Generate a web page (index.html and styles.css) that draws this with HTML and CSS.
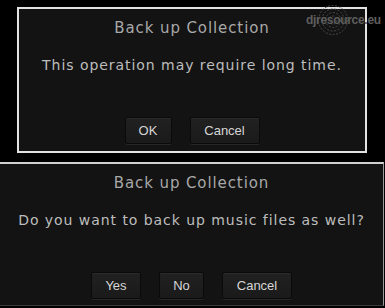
FILE: index.html
```html
<!DOCTYPE html>
<html>
<head>
<meta charset="utf-8">
<link rel="stylesheet" href="styles.css">
</head>
<body>
<div class="page">
  <div class="dialog dialog-first">
    <div class="title">Back up Collection</div>
    <div class="message">This operation may require long time.</div>
    <div class="buttons">
      <div class="btn btn-ok">OK</div>
      <div class="btn btn-cancel">Cancel</div>
    </div>
  </div>
  <div class="dialog dialog-second">
    <div class="title">Back up Collection</div>
    <div class="message">Do you want to back up music files as well?</div>
    <div class="buttons">
      <div class="btn btn-yes">Yes</div>
      <div class="btn btn-no">No</div>
      <div class="btn btn-cancel">Cancel</div>
    </div>
  </div>
  <div class="watermark">
    <svg class="wm-logo" width="32" height="32" viewBox="0 0 32 32">
      <g fill="none" stroke="#4a4a4a" stroke-width="1" stroke-dasharray="2 1.5">
        <circle cx="16" cy="16" r="14.5"/>
        <circle cx="16" cy="16" r="11"/>
        <circle cx="16" cy="16" r="7.5"/>
        <circle cx="16" cy="16" r="4"/>
      </g>
    </svg>
    <span class="wm-text">djresource.eu</span>
  </div>
</div>
</body>
</html>
```
FILE: styles.css
```css
html, body {
  margin: 0;
  padding: 0;
  background: #000;
}
.page {
  position: relative;
  width: 385px;
  height: 308px;
  overflow: hidden;
  background: #000;
  padding-top: 7px;
  box-sizing: border-box;
}
.dialog {
  box-sizing: border-box;
  background: #131313;
  display: flex;
  flex-direction: column;
  align-items: center;
  font-family: "DejaVu Sans", sans-serif;
}
.dialog-first {
  margin-left: 17px;
  width: 350px;
  height: 146px;
  border: 2px solid #e2e2e2;
  padding-top: 9px;
}
.dialog-second {
  margin-top: 9px;
  width: 384px;
  height: 144px;
  border-top: 2px solid #d0d0d0;
  border-right: 1px solid #9a9a9a;
  border-bottom: 1px solid #3a3a3a;
  padding-top: 9px;
}
.title {
  color: #a8a8a8;
  font-size: 15px;
  line-height: 20px;
  letter-spacing: 0.9px;
}
.message {
  margin-top: 17px;
  color: #bdbdbd;
  font-size: 14px;
  line-height: 20px;
  letter-spacing: 0.95px;
  white-space: nowrap;
}
.buttons {
  margin-top: 42px;
  display: flex;
  gap: 18px;
}
.btn {
  box-sizing: border-box;
  height: 27px;
  background: linear-gradient(#212121, #1a1a1a);
  border: 1px solid #0a0a0a;
  border-radius: 2px;
  box-shadow: inset 0 1px 0 #2a2a2a, 0 1px 0 #262626;
  color: #d6d6d6;
  font-family: "Liberation Sans", Arial, sans-serif;
  font-size: 13px;
  line-height: 25px;
  text-align: center;
}
.btn-ok { width: 47px; }
.btn-cancel { width: 70px; }
.btn-yes { width: 50px; }
.btn-no { width: 45px; }
.watermark {
  position: absolute;
  left: 304px;
  top: 4px;
  width: 81px;
  height: 32px;
}
.wm-logo {
  position: absolute;
  left: 13px;
  top: 0;
}
.wm-text {
  position: absolute;
  left: 2px;
  top: 9px;
  font-family: "Liberation Sans", Arial, sans-serif;
  font-weight: bold;
  font-size: 12px;
  color: #5e5e5e;
  letter-spacing: -0.3px;
}
```
